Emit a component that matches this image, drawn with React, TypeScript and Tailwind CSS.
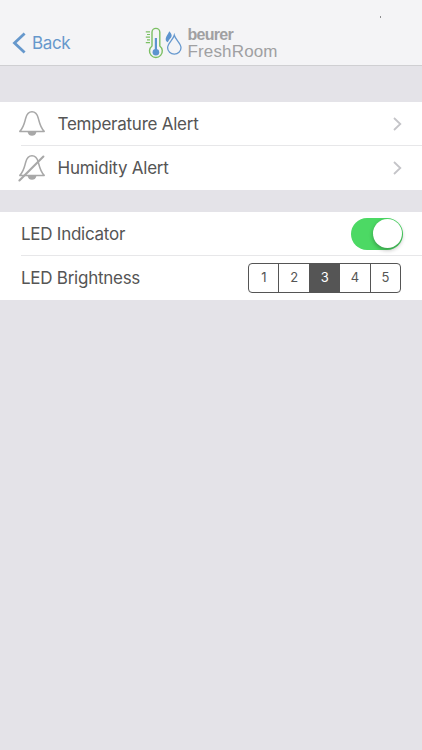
import React, { useState } from "react";

function Bell({ muted = false }: { muted?: boolean }) {
  return (
    <svg className="h-[30px] w-[30px] shrink-0" viewBox="0 0 30 30" fill="none" stroke="#a8a8a8" strokeWidth="1.5" strokeLinecap="round" strokeLinejoin="round">
      <path d="M2.8 22.4H27.2C23.2 18.4 22.6 14 21.3 9.2C20.2 5 18.2 2.7 15 2.7C11.8 2.7 9.8 5 8.7 9.2C7.4 14 6.8 18.4 2.8 22.4Z" />
      <path d="M10.6 23H19.4C18.8 25.8 17.2 26.8 15 26.8C12.8 26.8 11.2 25.8 10.6 23Z" fill="#a8a8a8" stroke="none" />
      {muted && <path d="M2.4 27.5L26.4 3.6" strokeWidth="2.1" />}
    </svg>
  );
}

function Logo() {
  return (
    <svg className="h-[38px] w-[45px] shrink-0" viewBox="0 0 45 38" fill="none">
      <g stroke="#7bbf63" strokeWidth="1.4">
        <path d="M10 22V8.3A3.9 3.9 0 0 1 17.8 8.3V22A6.4 6.4 0 1 1 10 22Z" />
        <path d="M3.8 7.8H8M5 10.5H8M3.8 13.2H8M5 15.9H8M3.8 18.6H8" strokeWidth="1.2" />
      </g>
      <path d="M13.9 14V27" stroke="#5d94cf" strokeWidth="2.2" />
      <circle cx="13.9" cy="28.3" r="3.3" fill="#5d94cf" />
      <path d="M27.2 7.2C30 10.2 30.6 12.2 28.2 14.4C27 15.6 26.4 17 25.7 18.3C23.4 17.2 23.2 14.8 24.4 12.4C25.5 10.4 26.7 9.2 27.2 7.2Z" fill="#5d94cf" />
      <path d="M32.3 11.2C33.7 16.2 39 19.1 39 23.8A6.7 6.3 0 0 1 25.6 23.8C25.6 19.1 30.9 16.2 32.3 11.2Z" stroke="#6799cf" strokeWidth="1.3" />
    </svg>
  );
}

function AlertRow({ label, muted }: { label: string; muted?: boolean }) {
  return (
    <div className={`flex items-center pl-[17px] pr-[20px] ${muted ? "h-[44px]" : "h-[43px]"}`}>
      <Bell muted={muted} />
      <span className={`ml-[10.5px] flex-1 text-[17px] leading-5 tracking-[-0.24px] ${muted ? "" : "pt-px"}`}>{label}</span>
      <svg className="h-[14px] w-[9px]" viewBox="0 0 9 14" fill="none" stroke="#c4c4c8" strokeWidth="1.8">
        <path d="M1 1L7.3 7L1 13" />
      </svg>
    </div>
  );
}

export default function App() {
  const [level, setLevel] = useState(3);
  const [on, setOn] = useState(true);
  return (
    <div className="min-h-[750px] w-full bg-[#e4e3e8] font-['Inter',sans-serif] text-[#555555]">
      <header className="relative flex h-[66px] items-start border-b border-[#cfcfd2] bg-[#f4f4f6] pt-[24px]">
        <button className="ml-[12px] flex h-[38px] w-[130px] items-center text-[17px] tracking-[-0.35px] text-[#6698cc]">
          <svg className="mr-[6px] h-[22px] w-[14px]" viewBox="0 0 14 22" fill="none" stroke="#6698cc" strokeWidth="2.8">
            <path d="M12.6 1.5L2.5 11L12.6 20.5" />
          </svg>
          <span className="pt-[2px]">Back</span>
        </button>
        <Logo />
        <div className="pt-[3px] pl-[0.5px] font-['Liberation_Sans',sans-serif] text-[#a0a0a2]">
          <div className="text-[16px] leading-[16px] font-bold tracking-[-0.7px]">beurer</div>
          <div className="text-[17px] leading-[18px] tracking-[0.15px]">FreshRoom</div>
        </div>
        <span className="absolute top-[16px] left-[380px] h-[2px] w-px bg-[#8c8c8e]" />
      </header>
      <section className="mt-[36px] bg-white">
        <AlertRow label="Temperature Alert" />
        <div className="ml-[21px] h-px bg-[#e7e7e9]" />
        <AlertRow label="Humidity Alert" muted />
      </section>
      <section className="mt-[22px] bg-white text-[17px] tracking-[-0.26px]">
        <div className="flex h-[43px] items-center justify-between pl-[21px] pr-[19px]">
          <span className="pt-[2px]">LED Indicator</span>
          <button aria-label="LED Indicator" onClick={() => setOn(!on)} className={`flex h-[32px] w-[52px] items-center rounded-full px-[1.5px] ${on ? "justify-end bg-[#4cd964]" : "justify-start bg-[#dddddd]"}`}>
            <span className="h-[29px] w-[29px] rounded-full bg-white shadow-[0_2px_4px_rgba(0,0,0,0.3)]" />
          </button>
        </div>
        <div className="ml-[21px] h-px bg-[#e7e7e9]" />
        <div className="flex h-[44px] items-center justify-between pl-[21px] pr-[21px]">
          <span className="pt-[2px]">LED Brightness</span>
          <div className="flex h-[30px] w-[153px] divide-x divide-[#555555] overflow-hidden rounded-[4px] border border-[#555555]">
            {[1, 2, 3, 4, 5].map((n) => (
              <button key={n} onClick={() => setLevel(n)} className={`flex-1 text-[13px] ${n === level ? "bg-[#555555] text-white" : ""}`}>
                {n}
              </button>
            ))}
          </div>
        </div>
      </section>
    </div>
  );
}
